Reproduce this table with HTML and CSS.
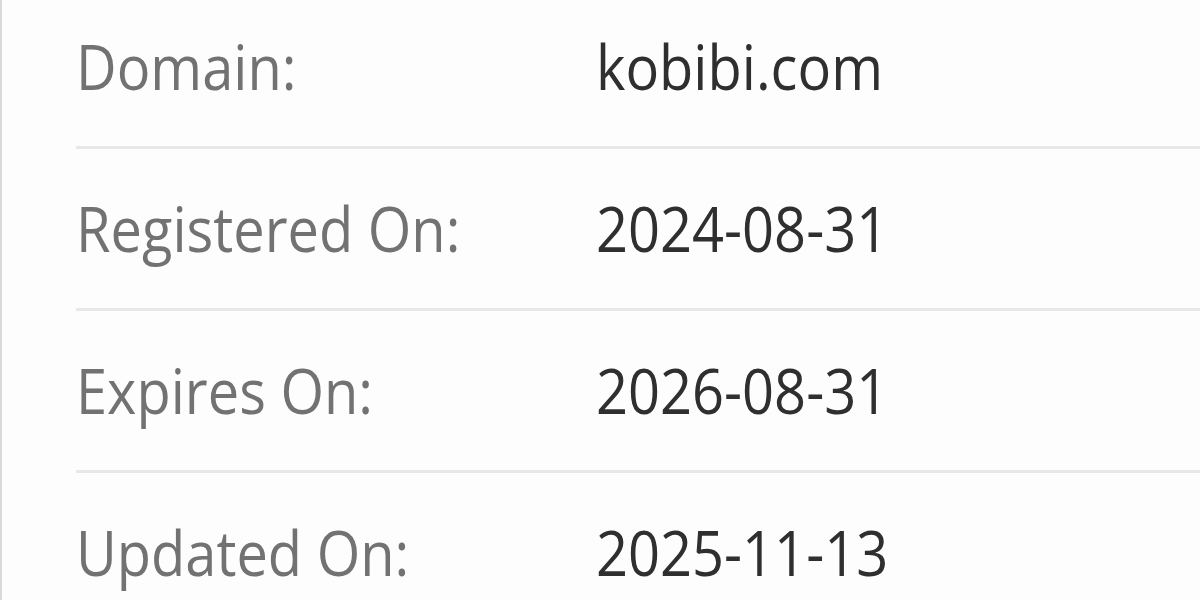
FILE: index.html
```html
<!DOCTYPE html>
<html lang="en">
<head>
<meta charset="utf-8">
<title>Whois</title>
<link rel="stylesheet" href="styles.css">
</head>
<body>
<div class="panel">
  <div class="rows">
    <div class="row"><div class="label"><span class="txt">Domain:</span></div><div class="value"><span class="txt">kobibi.com</span></div></div>
    <div class="row"><div class="label"><span class="txt">Registered On:</span></div><div class="value"><span class="txt">2024-08-31</span></div></div>
    <div class="row"><div class="label"><span class="txt">Expires On:</span></div><div class="value"><span class="txt">2026-08-31</span></div></div>
    <div class="row"><div class="label"><span class="txt">Updated On:</span></div><div class="value"><span class="txt">2025-11-13</span></div></div>
  </div>
</div>
</body>
</html>
```
FILE: styles.css
```css
html, body {
  margin: 0;
  padding: 0;
  background: #fdfdfd;
}
.panel {
  height: 600px;
  overflow: hidden;
  border-left: 2px solid #d9d9d9;
  padding-left: 74px;
  font-family: "Open Sans", "Noto Sans", sans-serif;
}
.rows {
  margin-top: -13px;
}
.row {
  display: grid;
  grid-template-columns: 520px 1fr;
  height: 159px;
  border-bottom: 3px solid #e8e8e8;
  box-sizing: content-box;
}
.label, .value {
  padding-top: 44px;
  font-size: 56px;
  line-height: 75px;
}
.label { color: #727272; }
.value { color: #2f2f2f; }
.txt {
  display: inline-block;
  transform: scaleY(1.12);
  transform-origin: 0 79%;
}
```
